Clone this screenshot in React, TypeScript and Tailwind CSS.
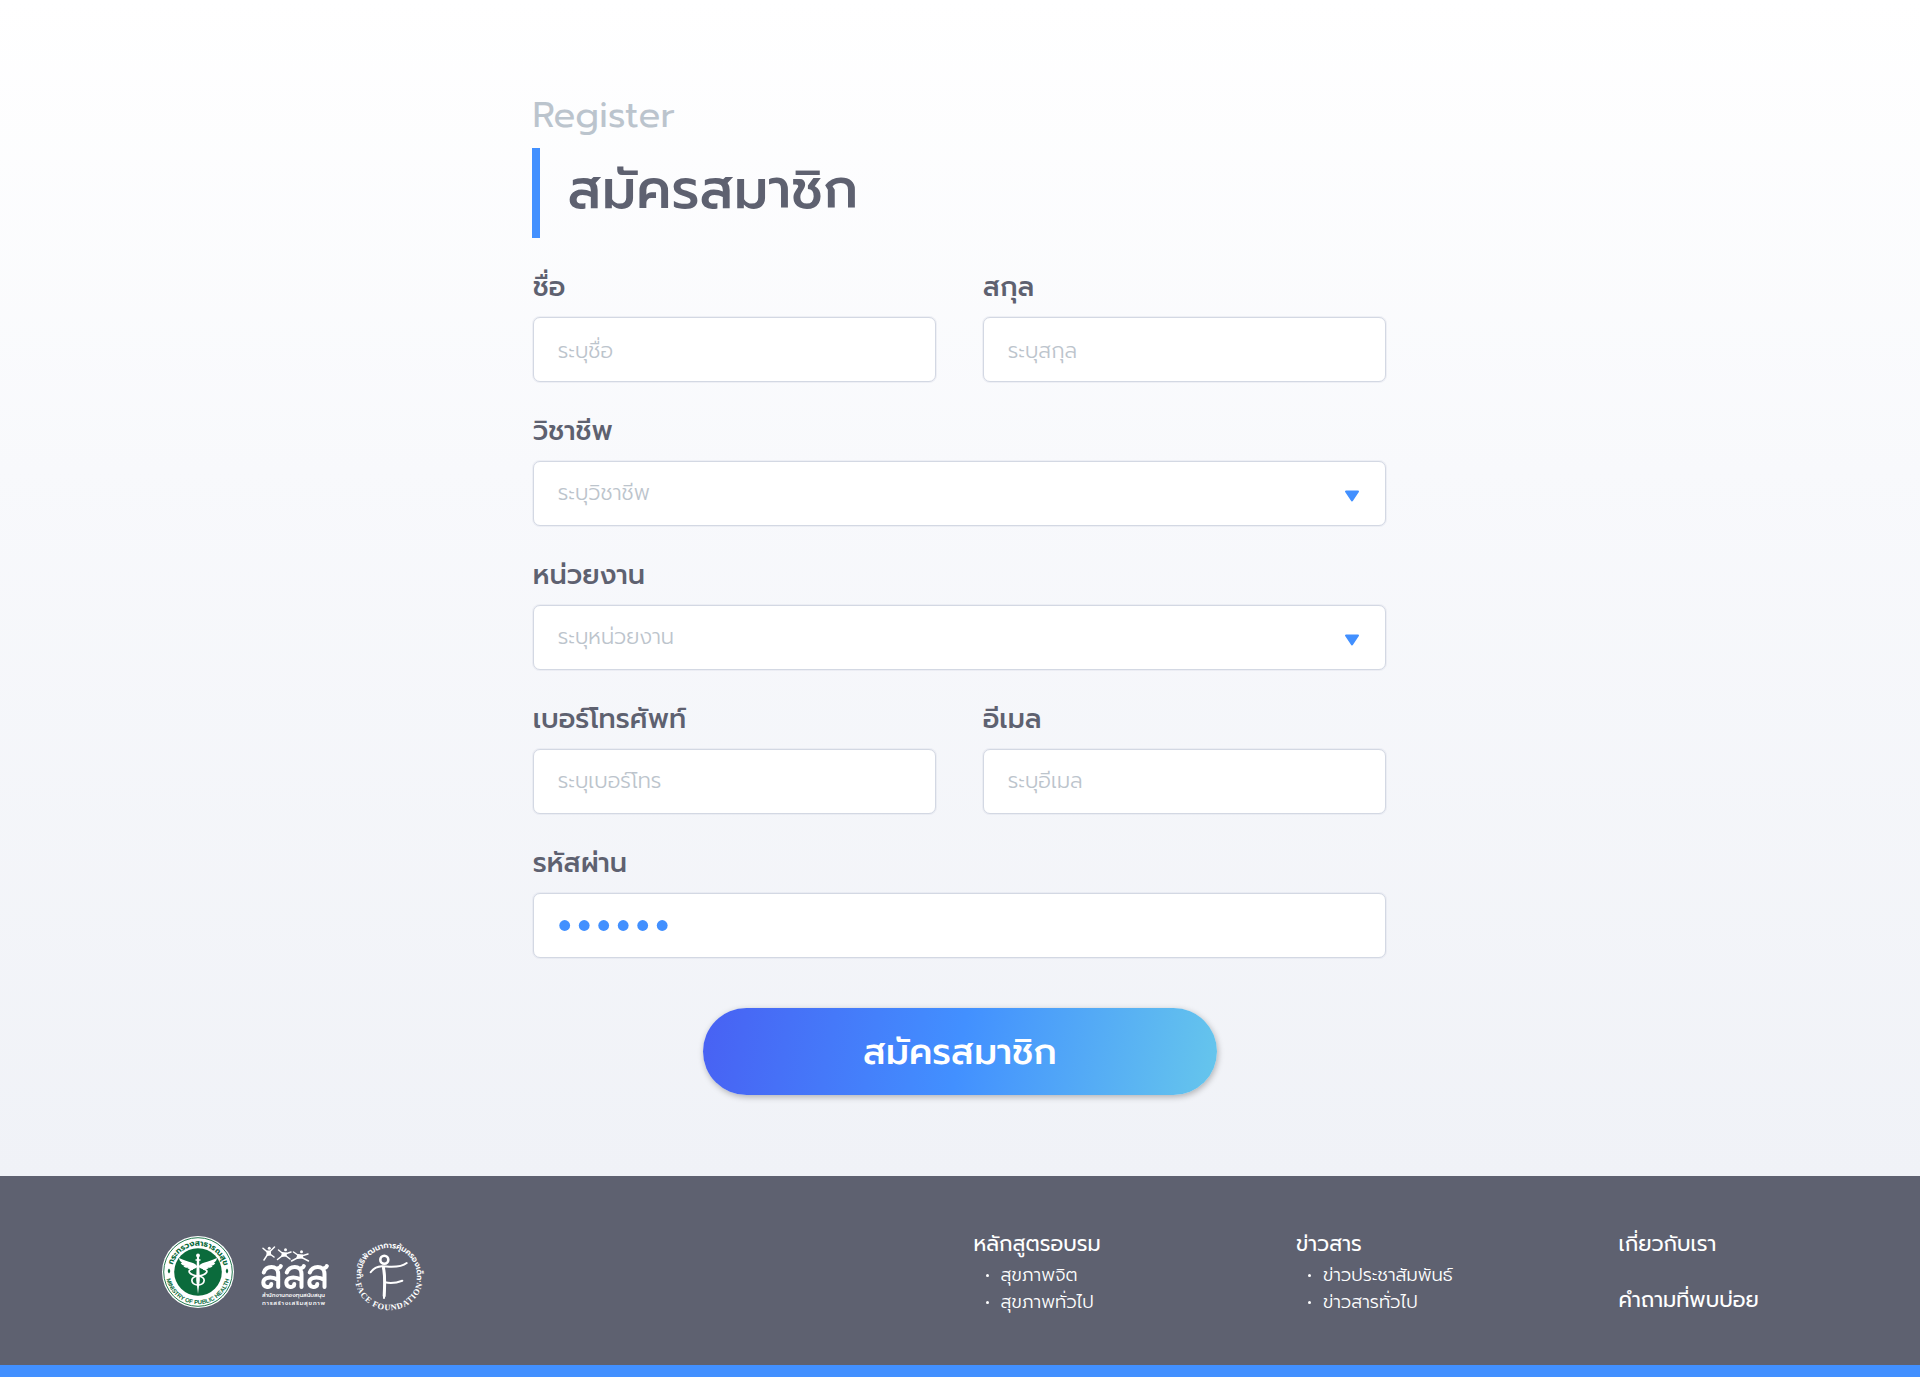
import React from "react";

function Label({ children }: { children: React.ReactNode }) {
  return (
    <div className="flex h-[54px] items-start whitespace-nowrap pt-[4px] text-[27px] font-medium leading-[40px] text-[#5e6170]">
      <span>{children}</span>
    </div>
  );
}

function Box({ children, className = "pb-[2px]", select = false }: { children?: React.ReactNode; className?: string; select?: boolean }) {
  return (
    <div className="flex h-[65px] items-center justify-between rounded-[7px] border border-[#d3d8e3] bg-white pl-[24px] pr-[25px] text-[21px] font-light text-[#bcc4cc] shadow-[0_0_0_1px_rgba(211,216,227,0.3)]">
      <span className={"whitespace-nowrap leading-[40px] " + className}>{children}</span>
      {select && (
        <svg width="16" height="12" viewBox="0 0 16 12" className="mt-1">
          <path d="M2 1.5H14L8 10.5Z" fill="#4290ff" stroke="#4290ff" strokeWidth="2" strokeLinejoin="round" />
        </svg>
      )}
    </div>
  );
}

function HealthLogo() {
  return (
    <svg width="72" height="72" viewBox="0 0 72 72">
      <defs>
        <path id="mophTop" d="M9.700 36A26.300 26.300 0 0 1 62.300 36" />
        <path id="mophBottom" d="M3.700 36A32.300 32.300 0 0 0 68.300 36" />
      </defs>
      <circle cx="36" cy="36" r="36" fill="#fff" />
      <circle cx="36" cy="36" r="34.300" fill="none" stroke="#0b6b3c" strokeWidth="0.900" />
      <circle cx="36" cy="36" r="23.800" fill="#0b6b3c" />
      <text fill="#0b6b3c" fontSize="8" fontWeight="700">
        <textPath href="#mophTop" startOffset="7" textLength="69">กระทรวงสาธารณสุข</textPath>
      </text>
      <text fill="#0b6b3c" fontSize="6" fontWeight="700" fontFamily="Liberation Sans">
        <textPath href="#mophBottom" startOffset="7" textLength="87">MINISTRY OF PUBLIC HEALTH</textPath>
      </text>
      <path d="M7 32.500q2.500 2.500 0 5q-2.500-2.500 0-5zM65 32.500q2.500 2.500 0 5q-2.500-2.500 0-5z" fill="#0b6b3c" />
      <g fill="#fff">
        <circle cx="36" cy="19.500" r="1.900" />
        <path d="M35 20h2l.8 24L36 58l-1.800-14z" />
        <path d="M35.500 31C34 26 27 27 17 22c.3 2.500 1.600 4 3.300 4.800l-1.600.1c1 1.800 2.400 2.600 4 2.800l-1.300.6c1.700 1.500 3.400 1.700 5 1.400l-1 .9c3.500 1.400 7 .8 10.100-1.600zM36.500 31C38 26 45 27 55 22c-.3 2.500-1.600 4-3.300 4.800l1.600.1c-1 1.800-2.400 2.600-4 2.800l1.300.6c-1.700 1.500-3.400 1.700-5 1.400l1 .9c-3.500 1.400-7 .8-10.100-1.600z" />
      </g>
      <path d="M31 33c-7 1-4 6 5 7s7 8 1 9M41 33c7 1 4 6-5 7s-7 8-1 9M33.500 24h5" fill="none" stroke="#fff" strokeWidth="1.700" />
    </svg>
  );
}

function SssLogo() {
  return (
    <svg width="70" height="64" viewBox="0 0 70 64">
      <g fill="none" stroke="#fff" strokeWidth="1.500" strokeLinecap="round">
        <path d="M3 2.200L8.500 7 14.500 1M4 14L8.500 7 14 11" />
        <path d="M18.500 4L24 8.500 31 6M17.500 13.500L24 8.500 30 13" />
        <path d="M33.500 6L40 10.500 48 8M31.500 15L40 10.500 48.500 15" />
      </g>
      <g fill="#fff">
        <path d="M6.500 4.500h4.500L11 9.500 6.500 10z" />
        <path d="M22 6l5 .5L26.500 10.500 21 11z" />
        <path d="M37.500 8l5.500.5L43 12.500 36 13z" />
        <circle cx="9.300" cy="2.300" r="1.500" />
        <circle cx="25.500" cy="3.800" r="1.500" />
        <circle cx="41.500" cy="5.800" r="1.500" />
      </g>
      <g fill="none" stroke="#fff" strokeWidth="4" strokeLinecap="round">
        <path d="M3.800 26.500C5 22.500 8 21 11.500 21S18.200 23 18.200 28V41M18.200 34C12 30 3.300 31 3.300 36.500S11 42.500 11.300 38M16.500 22.500q3.500-.3 4.300-2.400" />
        <path d="M26.800 26.500c1.500-4 4.500-5.500 8-5.500s6.700 2 6.700 7V41M41.500 34c-6.500-4-15.200-3-15.200 2.500s7.700 6 8 1.500M39.500 22.500q3.500-.3 4.300-2.400" />
        <path d="M49.800 26.500c1.500-4 4.500-5.500 8-5.500s6.700 2 6.700 7V41M64.500 34c-6.500-4-15.200-3-15.200 2.500s7.700 6 8 1.500M62.500 22.500q3.500-.3 4.300-2.400" />
      </g>
      <text x="2" y="51.300" fontSize="5.800" fontWeight="500" fill="#fff" textLength="63" lengthAdjust="spacingAndGlyphs">สำนักงานกองทุนสนับสนุน</text>
      <text x="2" y="58.700" fontSize="5.800" fontWeight="500" fill="#fff" textLength="63">การสร้างเสริมสุขภาพ</text>
    </svg>
  );
}

function FaceLogo() {
  return (
    <svg width="76" height="76" viewBox="-2 -2 76 76">
      <defs>
        <path id="faceTop" d="M8.300 40A28 28 0 1 1 63.700 40" />
        <path id="faceBottom" d="M1.700 36A34.300 34.300 0 0 0 70.300 36" />
      </defs>
      <text fill="#fff" fontSize="8" fontWeight="600">
        <textPath href="#faceTop" startOffset="1" textLength="95">มูลนิธิพัฒนาการคุ้มครองเด็ก</textPath>
      </text>
      <text fill="#fff" fontSize="8.400" fontWeight="700" fontFamily="Liberation Serif">
        <textPath href="#faceBottom" startOffset="4" textLength="99">·FACE FOUNDATION·</textPath>
      </text>
      <g fill="none" stroke="#fff" strokeWidth="2" strokeLinecap="round">
        <circle cx="31.300" cy="19.700" r="4" strokeWidth="2.600" />
        <path d="M17.700 32.300C20 29 24 26.500 29 26.300S46 29 53.700 23M30.300 27C33 38 31.500 46 31 58M32 42.300C37 43.500 42 43.500 49.300 40.700" />
        <path d="M30.500 28C32.500 38 31.500 46 31.200 56" strokeWidth="3" />
      </g>
    </svg>
  );
}

function FooterItem({ children }: { children: React.ReactNode }) {
  return (
    <li className="flex items-center whitespace-nowrap">
      <i className="ml-[12px] mr-[12px] h-[3px] w-[3px] rounded-full bg-white" />
      <span>{children}</span>
    </li>
  );
}

export default function App() {
  return (
    <div className="flex h-[1377px] w-[1920px] flex-col font-['Prompt','Noto_Sans',sans-serif]">
      <main className="flex h-[1176px] flex-col bg-[linear-gradient(180deg,#ffffff_0%,#f8f9fc_40%,#f0f2f7_100%)] pl-[532.400px] pt-[94px]">
        <div className="h-[54px] whitespace-nowrap text-[36px] leading-[43px] text-[#bbc4cd]"><span>Register</span></div>
        <div className="flex h-[90px] items-start border-l-[8px] border-[#4290ff] pl-[27px] pt-[2px] text-[54px] font-medium leading-[80px] text-[#5e6170]">
          <h1 className="whitespace-nowrap">สมัครสมาชิก</h1>
        </div>
        <div className="ml-[0.300px] mt-[25px] flex w-[853px] flex-col gap-[25px]">
          <div className="grid grid-cols-2 gap-[47px]">
            <div><Label>ชื่อ</Label><Box className="pt-[2px]">ระบุชื่อ</Box></div>
            <div><Label>สกุล</Label><Box className="pt-[2px]">ระบุสกุล</Box></div>
          </div>
          <div><Label>วิชาชีพ</Label><Box select>ระบุวิชาชีพ</Box></div>
          <div><Label>หน่วยงาน</Label><Box select>ระบุหน่วยงาน</Box></div>
          <div className="grid grid-cols-2 gap-[47px]">
            <div><Label>เบอร์โทรศัพท์</Label><Box>ระบุเบอร์โทร</Box></div>
            <div><Label>อีเมล</Label><Box>ระบุอีเมล</Box></div>
          </div>
          <div>
            <Label>รหัสผ่าน</Label>
            <div className="flex h-[65px] items-center rounded-[7px] border border-[#d3d8e3] bg-white pl-[25px] shadow-[0_0_0_1px_rgba(211,216,227,0.3)]">
              <svg width="112" height="12" viewBox="0 0 112 12" fill="#4290ff">
                {[0, 1, 2, 3, 4, 5].map((i) => <circle key={i} cx={5.7 + i * 19.5} cy="5.500" r="5.400" />)}
              </svg>
            </div>
          </div>
        </div>
        <button className="ml-[170.500px] mt-[50px] flex h-[87px] w-[514px] items-center justify-center whitespace-nowrap rounded-full bg-[linear-gradient(100deg,#4861f3_0%,#4290ff_50%,#66c6ec_100%)] text-[36px] font-medium text-white shadow-[1px_2px_6px_rgba(0,0,0,0.28)]">
          <span>สมัครสมาชิก</span>
        </button>
      </main>
      <footer className="flex h-[201px] border-b-[12px] border-[#4290ff] bg-[#5e6170] text-white">
        <div className="flex w-[973.500px] pl-[162px] pt-[60px]">
          <HealthLogo />
          <div className="ml-[26px] mt-[10px]"><SssLogo /></div>
          <div className="ml-[21px] mt-[2px]"><FaceLogo /></div>
        </div>
        <div className="w-[322.500px] pt-[52px]">
          <h2 className="whitespace-nowrap text-[21px] leading-[33px]">หลักสูตรอบรม</h2>
          <ul className="pt-[1px] text-[18px] font-light leading-[27px]">
            <FooterItem>สุขภาพจิต</FooterItem>
            <FooterItem>สุขภาพทั่วไป</FooterItem>
          </ul>
        </div>
        <div className="w-[322.500px] pt-[52px]">
          <h2 className="whitespace-nowrap text-[21px] leading-[33px]">ข่าวสาร</h2>
          <ul className="pt-[1px] text-[18px] font-light leading-[27px]">
            <FooterItem>ข่าวประชาสัมพันธ์</FooterItem>
            <FooterItem>ข่าวสารทั่วไป</FooterItem>
          </ul>
        </div>
        <div className="flex flex-col gap-[23px] pt-[52px] text-[21px] leading-[33px]">
          <span className="whitespace-nowrap">เกี่ยวกับเรา</span>
          <span className="whitespace-nowrap">คำถามที่พบบ่อย</span>
        </div>
      </footer>
    </div>
  );
}
